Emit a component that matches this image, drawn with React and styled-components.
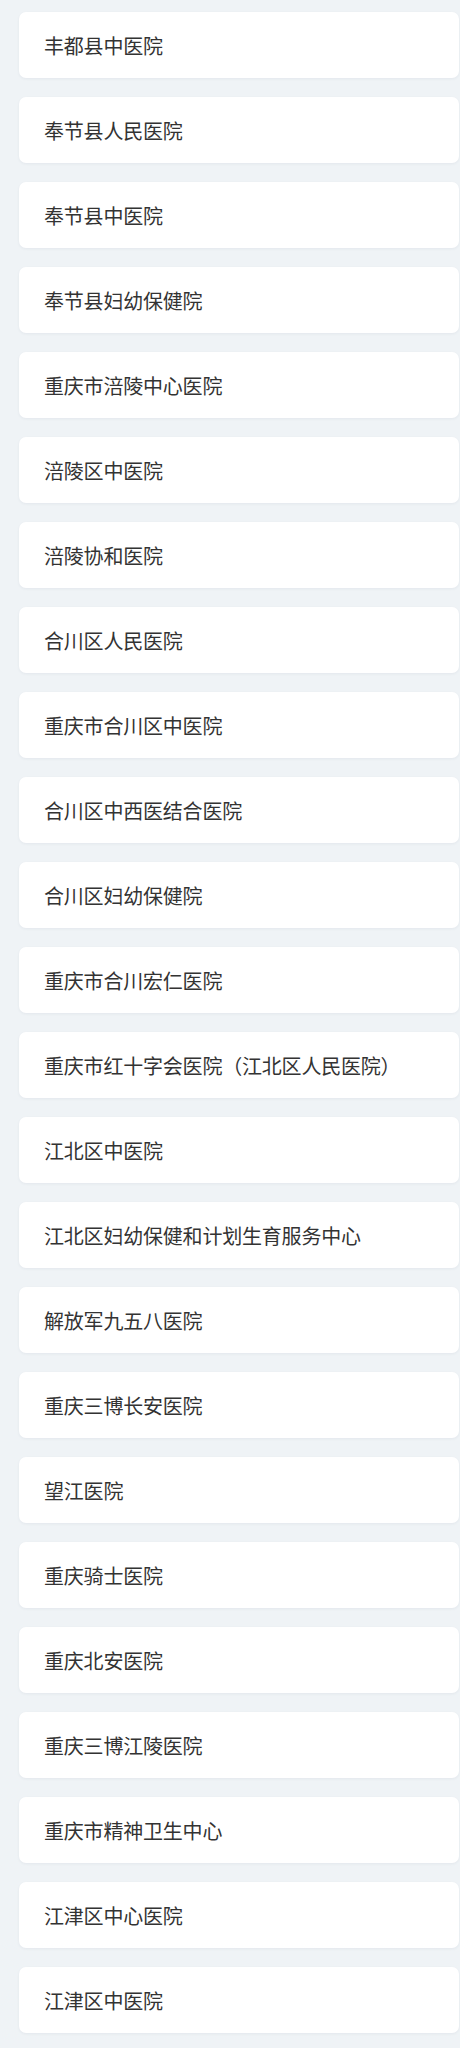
import React from 'react'
import styled, { createGlobalStyle } from 'styled-components'

const GlobalStyle = createGlobalStyle`
  html, body {
    margin: 0;
    padding: 0;
    background: #eff3f6;
  }
  body {
    font-family: "Noto Sans CJK SC", "Noto Sans", sans-serif;
  }
`

const hospitals = [
  '丰都县中医院',
  '奉节县人民医院',
  '奉节县中医院',
  '奉节县妇幼保健院',
  '重庆市涪陵中心医院',
  '涪陵区中医院',
  '涪陵协和医院',
  '合川区人民医院',
  '重庆市合川区中医院',
  '合川区中西医结合医院',
  '合川区妇幼保健院',
  '重庆市合川宏仁医院',
  '重庆市红十字会医院（江北区人民医院）',
  '江北区中医院',
  '江北区妇幼保健和计划生育服务中心',
  '解放军九五八医院',
  '重庆三博长安医院',
  '望江医院',
  '重庆骑士医院',
  '重庆北安医院',
  '重庆三博江陵医院',
  '重庆市精神卫生中心',
  '江津区中心医院',
  '江津区中医院',
]

export default function App() {
  return (
    <>
      <GlobalStyle />
      <List>
        {hospitals.map((name) => (
          <Card key={name}>{name}</Card>
        ))}
      </List>
    </>
  )
}

const List = styled.div`
  display: flex;
  flex-direction: column;
  gap: 19px;
  padding: 12px 1px 15px 19px;
`

const Card = styled.div`
  display: flex;
  align-items: center;
  height: 66px;
  padding-left: 25px;
  background: #fff;
  border-radius: 7px;
  box-shadow: 0 1px 3px rgba(30, 50, 80, 0.06);
  color: #333;
  font-size: 20px;
  letter-spacing: -0.2px;
`
